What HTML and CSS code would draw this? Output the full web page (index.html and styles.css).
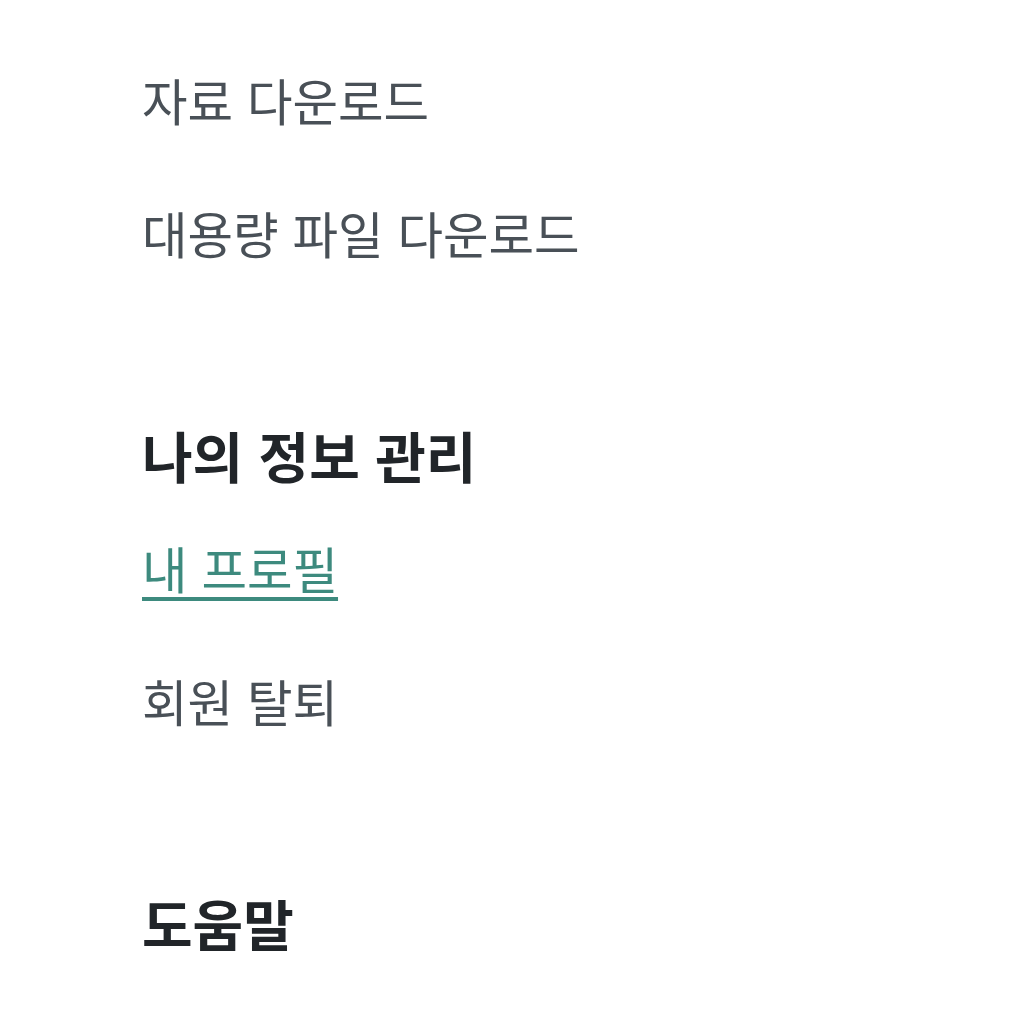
FILE: index.html
```html
<!DOCTYPE html>
<html lang="ko">
<head>
<meta charset="utf-8">
<link rel="stylesheet" href="styles.css">
</head>
<body>
<main class="menu">
  <section class="group">
    <ul class="items">
      <li><a class="item" href="#">자료 다운로드</a></li>
      <li><a class="item" href="#">대용량 파일 다운로드</a></li>
    </ul>
  </section>
  <section class="group">
    <h2 class="heading">나의 정보 관리</h2>
    <ul class="items">
      <li><a class="item active" href="#">내 프로필</a></li>
      <li><a class="item" href="#">회원 탈퇴</a></li>
    </ul>
  </section>
  <section class="group">
    <h2 class="heading">도움말</h2>
  </section>
</main>
</body>
</html>
```
FILE: styles.css
```css
html, body {
  margin: 0;
  padding: 0;
  background: #ffffff;
}
body {
  font-family: "Noto Sans CJK KR", "Noto Sans", sans-serif;
}
.menu {
  padding: 64px 0 0 142px;
  display: flex;
  flex-direction: column;
  gap: 147px;
}
.group {
  display: flex;
  flex-direction: column;
}
.heading {
  margin: 0;
  font-size: 55px;
  font-weight: 700;
  line-height: 76px;
  color: #212529;
}
.items {
  list-style: none;
  margin: 0;
  padding: 0;
  display: flex;
  flex-direction: column;
  gap: 61px;
}
.heading + .items {
  margin-top: 40px;
}
.item {
  display: inline-block;
  font-size: 49.5px;
  line-height: 72px;
  color: #495057;
  text-decoration: none;
}
.item.active {
  color: #3d8a7e;
  text-decoration: underline;
  text-decoration-thickness: 4px;
  text-underline-offset: 8px;
  text-decoration-skip-ink: none;
}
```
